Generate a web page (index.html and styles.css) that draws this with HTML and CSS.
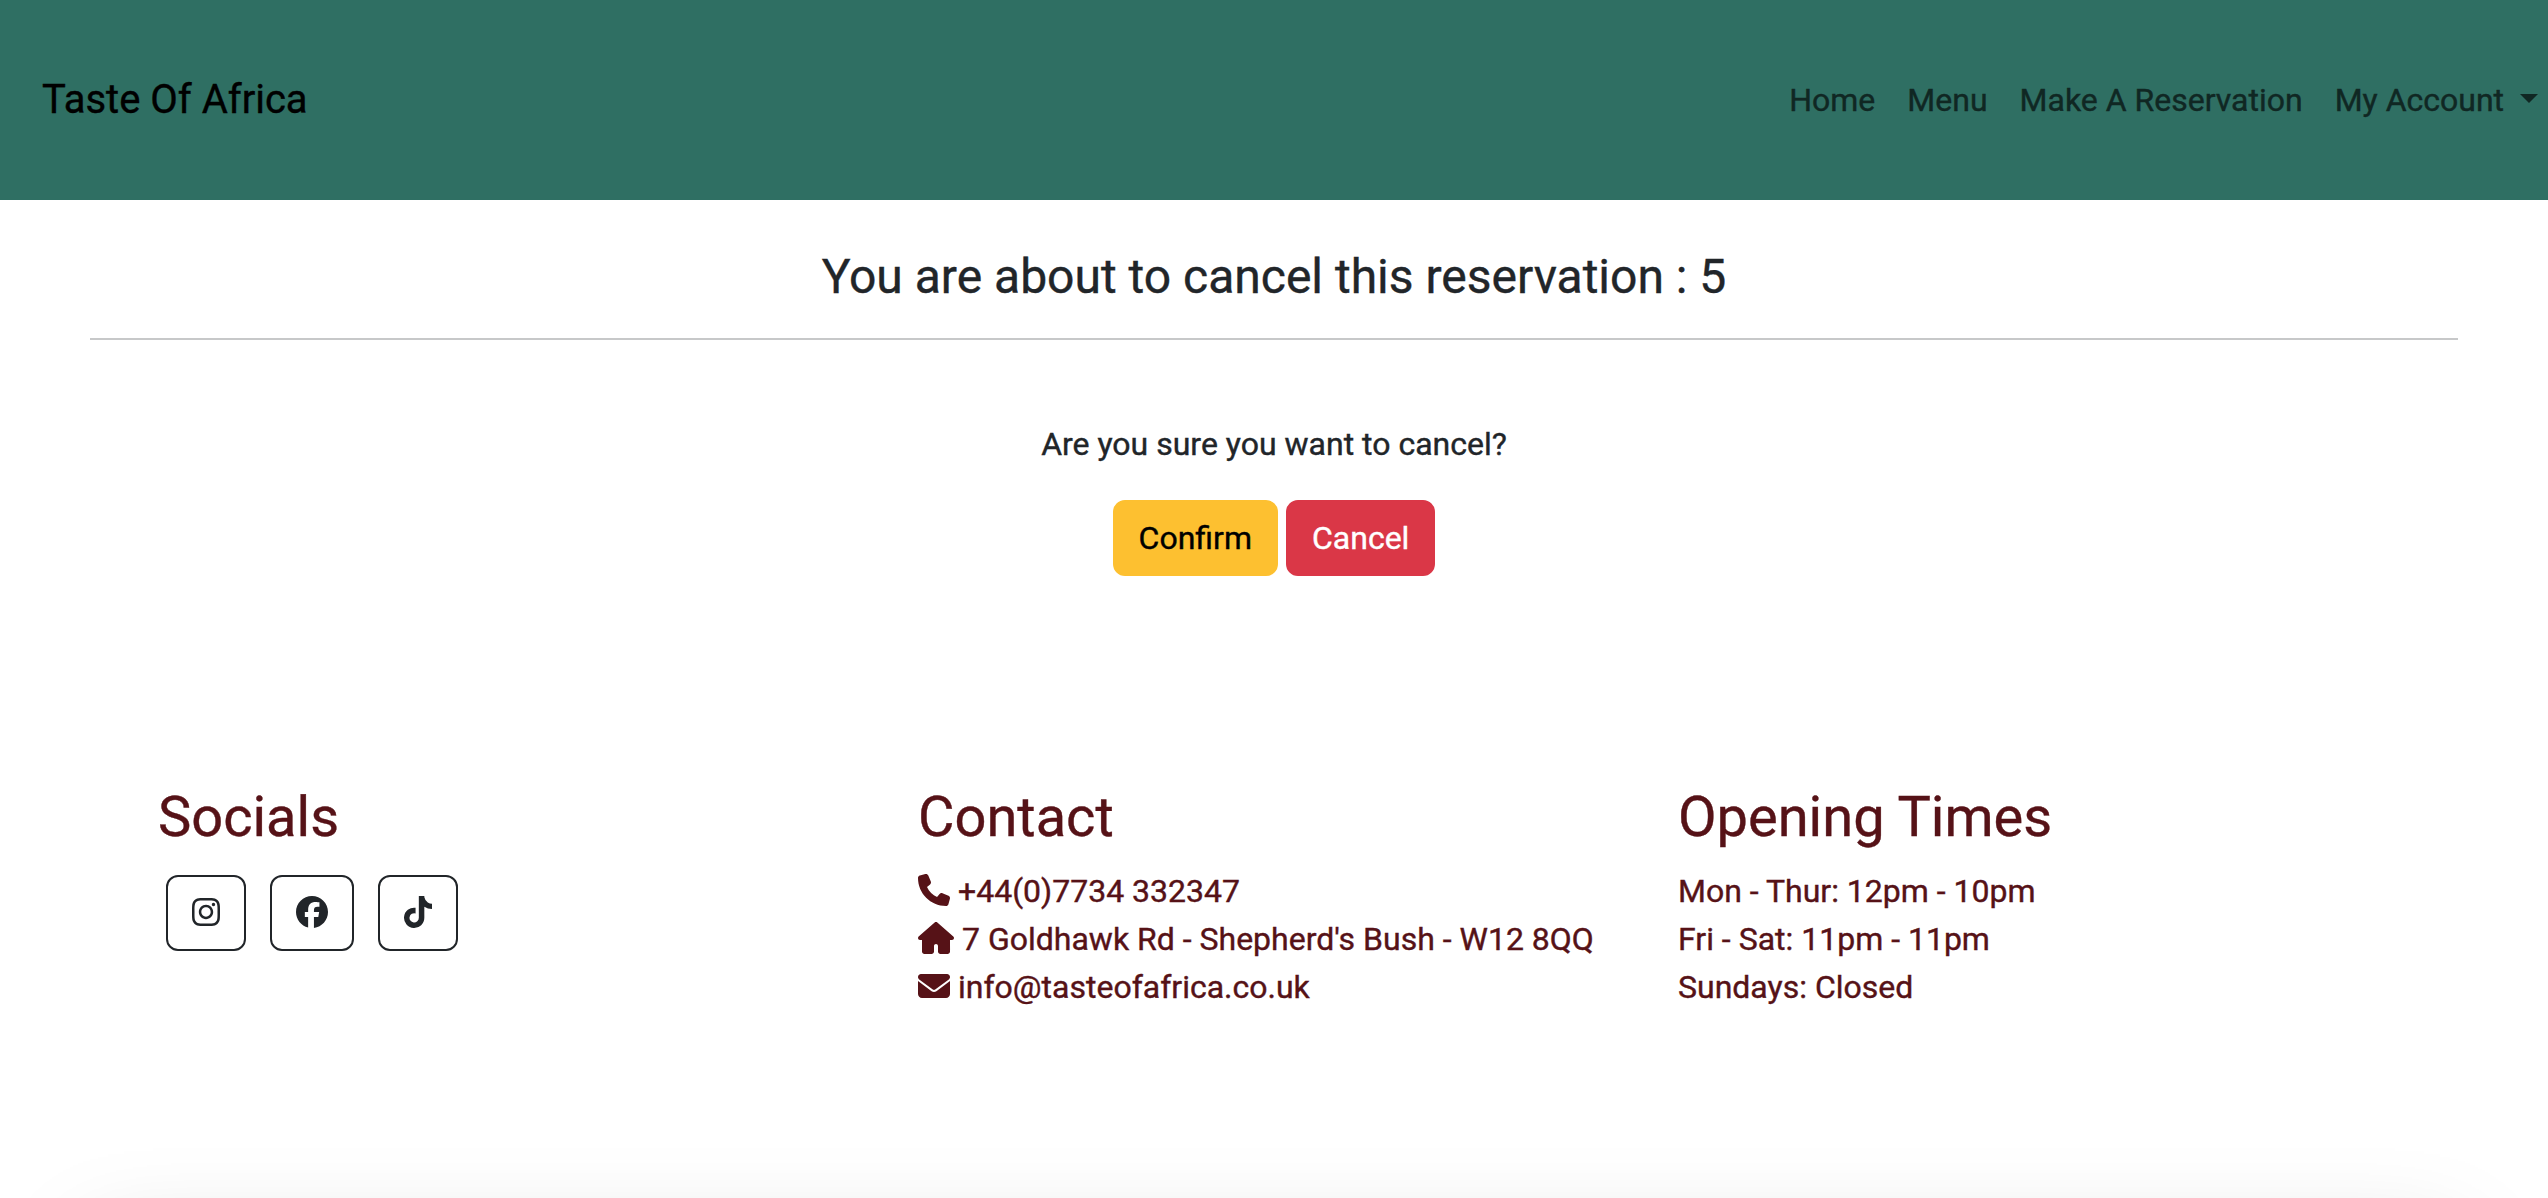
FILE: index.html
```html
<!DOCTYPE html>
<html lang="en">
<head>
<meta charset="utf-8">
<title>Taste Of Africa</title>
<link rel="stylesheet" href="styles.css">
</head>
<body>
<div class="page">
<header class="navbar">
  <a class="brand" href="#">Taste Of Africa</a>
  <nav class="nav">
    <a class="nav-link" href="#">Home</a>
    <a class="nav-link" href="#">Menu</a>
    <a class="nav-link" href="#">Make A Reservation</a>
    <a class="nav-link dropdown" href="#">My Account <span class="caret"></span></a>
  </nav>
</header>
<main class="content">
  <h1 class="title">You are about to cancel this reservation : 5</h1>
  <hr class="rule">
  <p class="question">Are you sure you want to cancel?</p>
  <div class="actions">
    <button class="btn btn-warning">Confirm</button>
    <button class="btn btn-danger">Cancel</button>
  </div>
</main>
<footer class="footer">
  <section class="col">
    <h2 class="heading">Socials</h2>
    <div class="socials">
      <a class="btn btn-outline" href="#" aria-label="Instagram"><svg class="icon icon-narrow" viewBox="0 0 448 512"><path d="M224.1 141c-63.6 0-114.9 51.3-114.9 114.9s51.3 114.9 114.9 114.9S339 319.5 339 255.900 287.700 141 224.100 141zm0 189.600c-41.100 0-74.700-33.500-74.700-74.700s33.500-74.700 74.700-74.700 74.700 33.500 74.700 74.700-33.600 74.700-74.700 74.700zm146.400-194.300c0 14.900-12 26.800-26.800 26.800-14.900 0-26.800-12-26.800-26.800s12-26.800 26.800-26.800 26.800 12 26.800 26.800zm76.100 27.200c-1.700-35.900-9.900-67.700-36.200-93.900-26.200-26.200-58-34.400-93.900-36.200-37-2.100-147.900-2.100-184.900 0-35.800 1.700-67.600 9.900-93.900 36.100s-34.400 58-36.200 93.900c-2.100 37-2.100 147.900 0 184.900 1.700 35.900 9.900 67.700 36.200 93.900s58 34.400 93.900 36.200c37 2.100 147.900 2.100 184.900 0 35.900-1.700 67.700-9.900 93.900-36.200 26.200-26.200 34.400-58 36.200-93.900 2.100-37 2.100-147.800 0-184.800zM398.800 388c-7.800 19.600-22.900 34.700-42.600 42.600-29.500 11.700-99.500 9-132.100 9s-102.700 2.600-132.100-9c-19.600-7.800-34.700-22.900-42.600-42.600-11.700-29.500-9-99.500-9-132.100s-2.600-102.700 9-132.100c7.800-19.600 22.900-34.700 42.600-42.600 29.500-11.700 99.500-9 132.100-9s102.700-2.600 132.100 9c19.600 7.800 34.700 22.900 42.600 42.600 11.700 29.500 9 99.500 9 132.100s2.700 102.700-9 132.100z"/></svg></a>
      <a class="btn btn-outline" href="#" aria-label="Facebook"><svg class="icon" viewBox="0 0 512 512"><path d="M512 256C512 114.6 397.4 0 256 0S0 114.600 0 256C0 376 82.700 476.800 194.200 504.500V334.200H141.400V256h52.800V222.300c0-87.100 39.400-127.500 125-127.500c16.200 0 44.200 3.200 55.700 6.400V172c-6-.6-16.500-1-29.600-1c-42 0-58.200 15.900-58.200 57.200V256h83.600l-14.400 78.200H287V510.100C413.800 494.800 512 386.900 512 256z"/></svg></a>
      <a class="btn btn-outline" href="#" aria-label="TikTok"><svg class="icon icon-narrow" viewBox="0 0 448 512"><path d="M448 209.910a210.060 210.060 0 0 1-122.770-39.250V349.380A162.550 162.550 0 1 1 185 188.310V278.200a74.620 74.620 0 1 0 52.230 71.180V0h88a121.180 121.180 0 0 0 1.860 22.170A122.180 122.180 0 0 0 381 102.390a121.430 121.430 0 0 0 67 20.140z"/></svg></a>
    </div>
  </section>
  <section class="col">
    <h2 class="heading">Contact</h2>
    <div class="line"><svg class="icon" viewBox="0 0 512 512"><path d="M164.900 24.600c-7.700-18.600-28-28.500-47.400-23.200l-88 24C12.100 30.200 0 46 0 64C0 311.400 200.600 512 448 512c18 0 33.800-12.100 38.600-29.500l24-88c5.300-19.400-4.600-39.700-23.200-47.400l-96-40c-16.300-6.800-35.200-2.100-46.300 11.600L304.700 368C234.300 334.700 177.300 277.700 144 207.300L193.300 167c13.700-11.200 18.400-30 11.600-46.300l-40-96z"/></svg>+44(0)7734 332347</div>
    <div class="line"><svg class="icon icon-wide" viewBox="0 0 576 512"><path d="M575.800 255.500c0 18-15 32.100-32 32.100h-32l.7 160.200c0 2.700-.2 5.400-.5 8.100V472c0 22.100-17.900 40-40 40H360c-22.100 0-40-17.900-40-40V384c0-17.700-14.300-32-32-32s-32 14.300-32 32v88c0 22.100-17.900 40-40 40H104c-22.100 0-40-17.900-40-40V287.600H32c-18 0-32-14-32-32.100c0-9 3-17 10-24L266.400 8c7-7 15-8 22-8s15 2 21 7L564.800 231.500c8 7 12 15 11 24z"/></svg>7 Goldhawk Rd - Shepherd's Bush - W12 8QQ</div>
    <div class="line"><svg class="icon" viewBox="0 0 512 512"><path d="M48 64C21.500 64 0 85.500 0 112c0 15.100 7.100 29.300 19.200 38.400L236.800 313.600c11.400 8.500 27 8.500 38.400 0L492.800 150.400c12.100-9.100 19.200-23.300 19.200-38.400c0-26.500-21.500-48-48-48H48zM0 176V384c0 35.300 28.700 64 64 64H448c35.300 0 64-28.700 64-64V176L294.400 339.200c-22.800 17.100-54 17.100-76.800 0L0 176z"/></svg>info@tasteofafrica.co.uk</div>
  </section>
  <section class="col">
    <h2 class="heading">Opening Times</h2>
    <div class="line">Mon - Thur: 12pm - 10pm</div>
    <div class="line">Fri - Sat: 11pm - 11pm</div>
    <div class="line">Sundays: Closed</div>
  </section>
</footer>
<div class="panel"></div>
</div>
</body>
</html>
```
FILE: styles.css
```css
* {
  box-sizing: border-box;
}

body {
  margin: 0;
  background: #fff;
  color: #212529;
  font: 400 32px/48px Roboto, "Liberation Sans", sans-serif;
  -webkit-text-stroke: 0.4px;
}

.page {
  height: 1198px;
  overflow: clip;
  display: flex;
  flex-direction: column;
}

a {
  color: inherit;
  text-decoration: none;
}

.navbar {
  flex: none;
  height: 200px;
  padding: 0 10px 0 42px;
  display: flex;
  align-items: center;
  justify-content: space-between;
  background: #2f6f63;
}

.brand {
  color: #000;
  font-size: 40px;
  line-height: 60px;
}

.nav {
  display: flex;
  gap: 32px;
  color: #102723;
}

.caret {
  display: inline-block;
  margin-left: 8px;
  vertical-align: 8px;
  border-top: 9.600px solid;
  border-left: 9.600px solid transparent;
  border-right: 9.600px solid transparent;
}

.content {
  flex: none;
  height: 584px;
  padding: 48px 90px 0;
  text-align: center;
}

.title {
  margin: 0 0 32px;
  font-size: 48px;
  font-weight: 400;
  line-height: 57.600px;
}

.rule {
  margin: 0 0 80px;
  border: 0;
  border-top: 2px solid #c7c8c9;
}

.question {
  margin: 0 0 32px;
}

.actions {
  display: flex;
  justify-content: center;
  gap: 8px;
}

.btn {
  display: flex;
  align-items: center;
  height: 76px;
  padding: 12px 24px;
  border: 2px solid transparent;
  border-radius: 12px;
  font: inherit;
}

.btn-warning {
  background: #fdc030;
  border-color: #fdc030;
  color: #000;
}

.btn-danger {
  background: #da3747;
  border-color: #da3747;
  color: #fff;
}

.btn-outline {
  border-color: #212529;
}

.footer {
  flex: none;
  width: 2280px;
  height: 414px;
  margin: 0 auto;
  display: grid;
  grid-template-columns: repeat(3, 1fr);
  color: #561217;
}

.col {
  padding: 0 24px;
}

.heading {
  margin: 0 0 16px;
  font-size: 56px;
  font-weight: 400;
  line-height: 67.200px;
}

.socials {
  display: flex;
  gap: 24px;
  padding: 8px 8px 0;
  color: #212529;
}

.socials .icon {
  margin-bottom: 2px;
}

.line {
  display: flex;
  gap: 8px;
  white-space: nowrap;
}

.icon {
  display: block;
  flex: none;
  width: 32px;
  height: 32px;
  fill: currentColor;
}

.line .icon {
  margin-top: 7px;
}

.icon-narrow {
  width: 28px;
}

.line .icon-wide {
  width: 36px;
}

.panel {
  flex: none;
  height: 400px;
  margin: 18px 90px 0;
  box-shadow: 0 32px 96px rgba(0, 0, 0, 0.175);
}
```
